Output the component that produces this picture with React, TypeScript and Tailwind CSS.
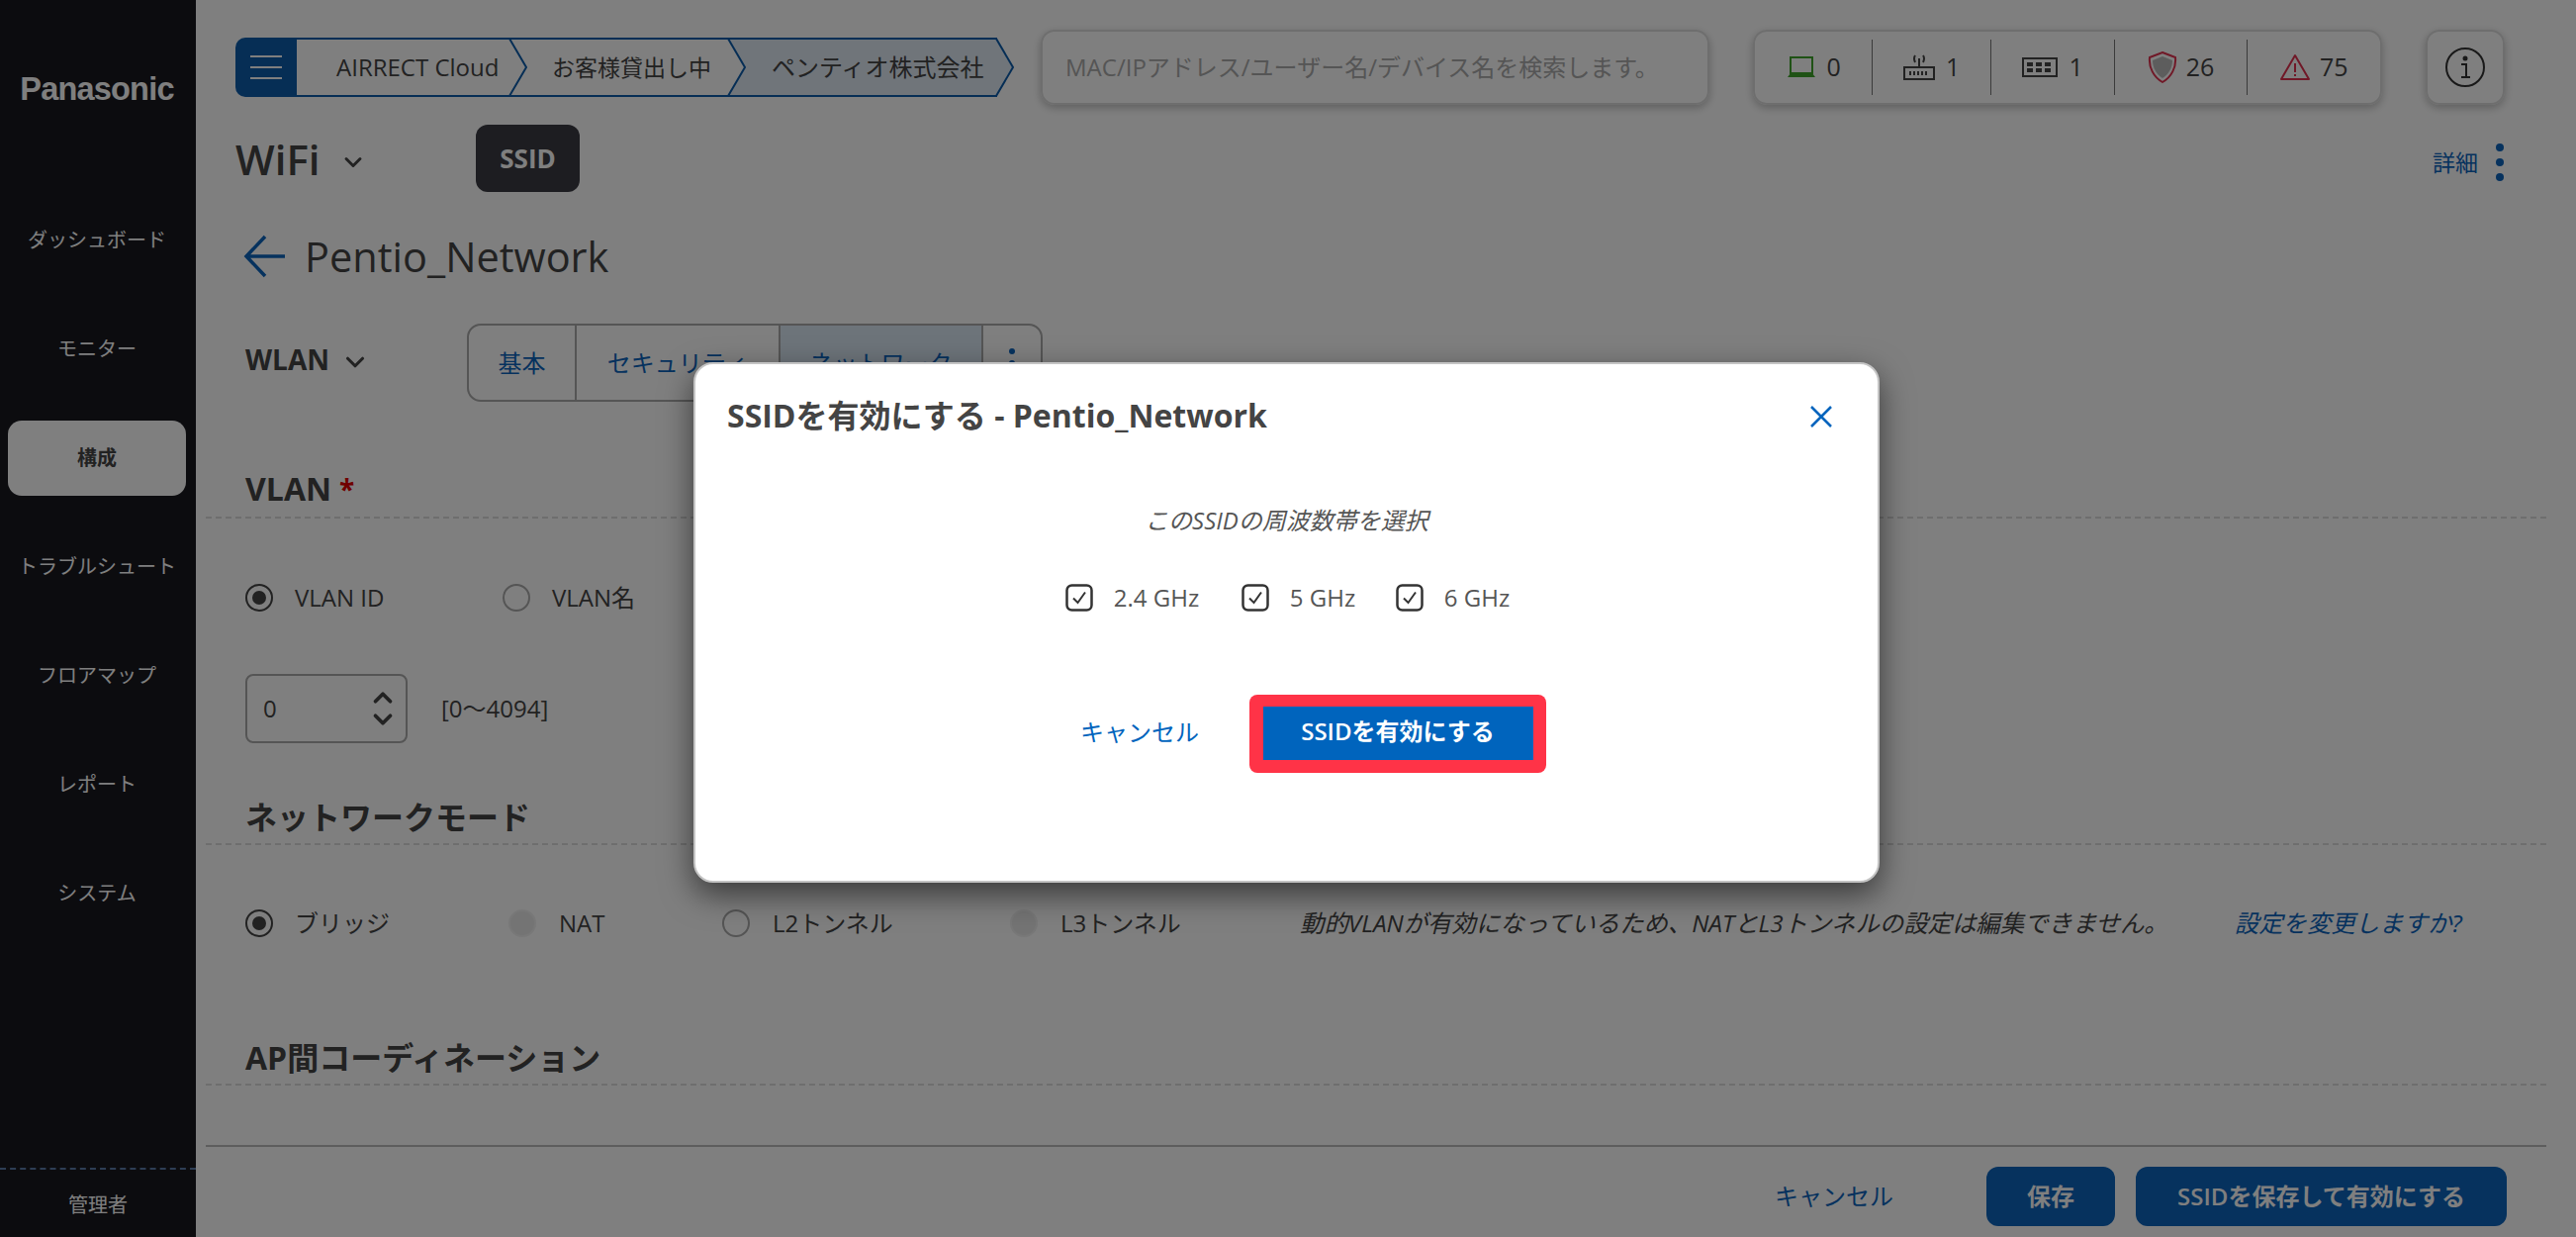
import React from "react";
import { ChevronDown, ChevronUp } from "lucide-react";

const font = { fontFamily: '"Open Sans","Noto Sans CJK JP",sans-serif' };

function Crumb({ label, w, last, text }: { label: string; w: string; last?: boolean; text: string }) {
  return (
    <div className={`relative flex h-full items-center border-y-[2px] border-[#0d5cab] ${w} ${last ? "bg-[#e0eaf5]" : "bg-white"}`}>
      <span className={`relative z-[2] w-full text-[#444] whitespace-nowrap ${text}`}>{label}</span>
      <svg className="absolute right-[-18px] top-[-2px] z-[1]" width="20" height="60" viewBox="0 0 20 60">
        <path d="M1 1 L18 30 L1 59" fill={last ? "#e0eaf5" : "#ffffff"} stroke="#0d5cab" strokeWidth="2" />
      </svg>
    </div>
  );
}

function Sep() {
  return <span className="h-[56px] w-[1px] bg-[#777]" />;
}

function Radio({ checked, disabled }: { checked?: boolean; disabled?: boolean }) {
  return (
    <span
      className={`flex h-[28px] w-[28px] shrink-0 items-center justify-center rounded-full border-[2px] ${
        disabled ? "border-[#f0f0f0] bg-[#e8e8e8]" : checked ? "border-[#444]" : "border-[#aaa]"
      }`}
    >
      {checked && <span className="h-[14px] w-[14px] rounded-full bg-[#444]" />}
    </span>
  );
}

function Section({ children, h, pb, required }: { children: React.ReactNode; h: string; pb: string; required?: boolean }) {
  return (
    <div className={`flex items-end border-b-[2px] border-dashed border-[#ddd] pl-[40px] ${h} ${pb}`}>
      <span className="text-[32px] font-bold leading-[40px] text-[#444]">{children}</span>
      {required && <span className="ml-[8px] text-[28px] font-bold leading-[40px] text-[#e00000]">*</span>}
    </div>
  );
}

function Check({ label, w }: { label: string; w: string }) {
  return (
    <div className={`flex items-center ${w}`}>
      <svg width="28" height="28" viewBox="0 0 28 28" fill="none">
        <rect x="1.5" y="1.5" width="25" height="25" rx="5" stroke="#333" strokeWidth="2.5" />
        <path d="M8 14.5 L12.5 19 L20 8.5" stroke="#333" strokeWidth="2" />
      </svg>
      <span className="ml-[21px] text-[24px] text-[#555] whitespace-nowrap">{label}</span>
    </div>
  );
}

export default function App() {
  const nav = ["ダッシュボード", "モニター", "構成", "トラブルシュート", "フロアマップ", "レポート", "システム"];
  return (
    <div style={font} className="relative flex h-[1250px] w-[2604px] overflow-hidden bg-white">
      <aside className="flex w-[198px] shrink-0 flex-col bg-[#18181f] text-white">
        <div className="flex h-[125px] items-start justify-center pr-[2px] pt-[65px]">
          <span style={{ fontFamily: '"Liberation Sans",sans-serif' }} className="text-[32.5px] font-bold leading-[50px] tracking-[-0.8px] text-white">
            Panasonic
          </span>
        </div>
        <nav className="flex flex-1 flex-col gap-[34px] pl-[8px] pr-[10px] pt-[80px]">
          {nav.map((n, i) => (
            <div
              key={n}
              className={`flex h-[76px] items-center justify-center whitespace-nowrap rounded-[14px] text-[20px] ${
                i === 2 ? "bg-white font-semibold text-[#444]" : ""
              }`}
            >
              {n}
            </div>
          ))}
        </nav>
        <div className="flex h-[70px] items-center justify-center border-t-[2px] border-dashed border-[#5c7ca8] pt-[4px] text-[20px]">管理者</div>
      </aside>

      <main className="flex min-w-0 flex-1 flex-col pl-[10px] pr-[30px]">
        <div className="mt-[30px] flex h-[76px] items-center pl-[30px]">
          <div className="flex h-[60px] w-[788px] shrink-0 items-center">
            <div className="flex h-full w-[62px] shrink-0 flex-col items-center justify-center gap-[9px] rounded-l-[10px] bg-[#0d5cab]">
              <span className="h-[2px] w-[32px] bg-white" />
              <span className="h-[2px] w-[32px] bg-white" />
              <span className="h-[2px] w-[32px] bg-white" />
            </div>
            <Crumb label="AIRRECT Cloud" w="w-[216px]" text="pl-[40px] text-[24px]" />
            <Crumb label="お客様貸出し中" w="w-[221px]" text="pl-[42px] text-[23px]" />
            <Crumb label="ペンティオ株式会社" w="w-[271px]" text="pl-[43px] text-[24px]" last />
          </div>
          <div className="ml-[26px] flex h-[76px] w-[676px] shrink-0 items-center rounded-[14px] border-[2px] border-[#ddd] pl-[23px] text-[24px] text-[#aaa] shadow-[0_3px_8px_rgba(0,0,0,0.25)] whitespace-nowrap">
            MAC/IPアドレス/ユーザー名/デバイス名を検索します。
          </div>
          <div className="ml-[44px] flex h-[76px] w-[636px] shrink-0 items-center rounded-[14px] border-[2px] border-[#ddd] text-[25px] text-[#444] shadow-[0_3px_8px_rgba(0,0,0,0.25)]">
            <div className="flex w-[119px] items-center justify-center gap-[11px]">
              <svg width="30" height="22" viewBox="0 0 30 22" fill="none">
                <rect x="4" y="1" width="22" height="16" stroke="#3fa52a" strokeWidth="2" />
                <path d="M1 21 L4 17 H26 L29 21 Z" fill="#3fa52a" />
              </svg>
              <span>0</span>
            </div>
            <Sep />
            <div className="flex w-[119px] items-center justify-center gap-[11px]">
              <svg width="32" height="26" viewBox="0 0 32 26" fill="none" stroke="#444" strokeWidth="2">
                <rect x="1" y="13" width="30" height="12" />
                <path d="M6 19 H26" strokeDasharray="2 2" strokeWidth="4" />
                <path d="M16 13 V4 M12 8 Q10 4 12 1 M20 8 Q22 4 20 1" />
              </svg>
              <span>1</span>
            </div>
            <Sep />
            <div className="flex w-[125px] items-center justify-center gap-[11px]">
              <svg width="36" height="20" viewBox="0 0 36 20" fill="none" stroke="#444" strokeWidth="2">
                <rect x="1" y="1" width="34" height="18" />
                <path d="M5 7 H31 M5 13 H31" strokeDasharray="6 3" strokeWidth="4" />
              </svg>
              <span>1</span>
            </div>
            <Sep />
            <div className="flex w-[133px] items-center justify-center gap-[9px]">
              <svg width="30" height="32" viewBox="0 0 30 32" fill="none">
                <path d="M15 1 L28 6 C29 16 24 26 15 31 C6 26 1 16 2 6 Z" stroke="#e0314f" strokeWidth="2" />
                <path d="M15 5 L25 9 C25 17 21 23 15 27 C9 23 5 17 5 9 Z" fill="#bbb" />
              </svg>
              <span>26</span>
            </div>
            <Sep />
            <div className="flex w-[135px] items-center justify-center gap-[9px]">
              <svg width="32" height="28" viewBox="0 0 32 28" fill="none">
                <path d="M16 2 L30 26 H2 Z" stroke="#e0314f" strokeWidth="2" strokeLinejoin="round" />
                <path d="M16 10 V19 M16 21 V23" stroke="#e0314f" strokeWidth="2" />
              </svg>
              <span>75</span>
            </div>
          </div>
          <div className="ml-[44px] flex h-[76px] w-[80px] shrink-0 items-center justify-center rounded-[14px] border-[2px] border-[#ddd] shadow-[0_3px_8px_rgba(0,0,0,0.25)]">
            <svg width="42" height="42" viewBox="0 0 42 42" fill="none" stroke="#333" strokeWidth="2">
              <circle cx="21" cy="21" r="19" />
              <path d="M17 18 H22 V31 M17 31 H26" />
              <circle cx="21" cy="12" r="1.5" fill="#333" />
            </svg>
          </div>
        </div>

        <div className="mt-[20px] flex h-[68px] items-center pl-[30px]">
          <span className="w-[105px] text-[42px] font-semibold text-[#444]">WiFi</span>
          <ChevronDown className="mt-[8px]" size={28} strokeWidth={2.5} color="#444" />
          <div className="ml-[110px] flex h-[68px] w-[105px] items-center justify-center rounded-[12px] bg-[#3a3a42] text-[26px] font-bold text-white">SSID</div>
          <div className="ml-auto mt-[8px] flex items-center gap-[18px] pr-[43px]">
            <span className="text-[23px] text-[#0d64bd]">詳細</span>
            <div className="flex flex-col gap-[7px]">
              <span className="h-[8px] w-[8px] rounded-full bg-[#0d64bd]" />
              <span className="h-[8px] w-[8px] rounded-full bg-[#0d64bd]" />
              <span className="h-[8px] w-[8px] rounded-full bg-[#0d64bd]" />
            </div>
          </div>
        </div>

        <div className="mt-[35px] flex h-[60px] items-center pl-[38px]">
          <svg width="46" height="44" viewBox="0 0 46 44" fill="none" stroke="#0d64bd" strokeWidth="3.5">
            <path d="M22 2 L3 22 L22 42 M3 22 H42" />
          </svg>
          <span className="ml-[16px] text-[41.5px] font-medium leading-[60px] text-[#444]">Pentio_Network</span>
        </div>

        <div className="mt-[38px] flex h-[79px] items-center pl-[40px]">
          <span className="-mt-[8px] w-[88px] text-[28px] font-bold text-[#444]">WLAN</span>
          <ChevronDown className="-mt-[2px] ml-[8px]" size={30} strokeWidth={2.5} color="#444" />
          <div className="ml-[98px] flex h-[79px] w-[582px] rounded-[14px] border-[2px] border-[#aaa] text-[24px] text-[#0d64bd]">
            <div className="flex w-[109px] items-center justify-center border-r-[2px] border-[#aaa]">基本</div>
            <div className="flex w-[206px] items-center justify-center border-r-[2px] border-[#aaa]">セキュリティ</div>
            <div className="flex w-[205px] items-center justify-center border-r-[2px] border-[#aaa] bg-[#dbe8f5]">ネットワーク</div>
            <div className="flex flex-1 flex-col items-center justify-center gap-[6px]">
              <span className="h-[6px] w-[6px] rounded-full bg-[#0d64bd]" />
              <span className="h-[6px] w-[6px] rounded-full bg-[#0d64bd]" />
              <span className="h-[6px] w-[6px] rounded-full bg-[#0d64bd]" />
            </div>
          </div>
        </div>

        <Section h="h-[118px]" pb="pb-[8px]" required>VLAN</Section>

        <div className="mt-[60px] flex h-[40px] items-center pl-[40px] text-[24px] text-[#444]">
          <Radio checked />
          <span className="ml-[22px] w-[210px]">VLAN ID</span>
          <Radio />
          <span className="ml-[22px]">VLAN名</span>
        </div>

        <div className="mt-[57px] flex h-[70px] items-center pl-[40px]">
          <div className="flex h-[70px] w-[164px] items-center justify-between rounded-[8px] border-[2px] border-[#aaa] pl-[16px] pr-[8px] text-[24px] text-[#444]">
            <span>0</span>
            <div className="flex flex-col items-center">
              <ChevronUp size={30} strokeWidth={3} className="-mb-[4px]" />
              <ChevronDown size={30} strokeWidth={3} className="-mt-[4px]" />
            </div>
          </div>
          <span className="ml-[34px] text-[24px] text-[#444]">[0〜4094]</span>
        </div>

        <Section h="h-[103px]" pb="pb-[6px]">ネットワークモード</Section>

        <div className="mt-[59px] flex h-[40px] items-center pl-[40px] text-[24px] text-[#444]">
          <Radio checked />
          <span className="ml-[22px] w-[216px]">ブリッジ</span>
          <Radio disabled />
          <span className="ml-[23px] w-[165px]">NAT</span>
          <Radio />
          <span className="ml-[23px] w-[240px]">L2トンネル</span>
          <Radio disabled />
          <span className="ml-[23px] w-[242px]">L3トンネル</span>
          <span className="text-[24.4px] italic whitespace-nowrap">動的VLANが有効になっているため、NATとL3トンネルの設定は編集できません。</span>
          <span className="ml-[67px] text-[24.4px] italic text-[#0d64bd] whitespace-nowrap">設定を変更しますか?</span>
        </div>

        <Section h="h-[144px]" pb="pb-[6px]">AP間コーディネーション</Section>

        <div className="mt-[60px] flex flex-1 items-center border-t-[2px] border-[#bbb] pr-[40px] pt-[8px]">
          <span className="ml-auto text-[24px] text-[#0d64bd]">キャンセル</span>
          <div className="ml-[94px] flex h-[60px] w-[130px] items-center justify-center rounded-[12px] bg-[#0d64bd] text-[24px] font-semibold text-white">保存</div>
          <div className="ml-[21px] flex h-[60px] w-[375px] items-center justify-center rounded-[12px] bg-[#0d64bd] text-[24px] font-semibold text-white">SSIDを保存して有効にする</div>
        </div>
      </main>

      <div className="absolute inset-0 z-20 bg-black/50" />

      <div className="absolute left-[701px] top-[366px] z-30 flex h-[526px] w-[1199px] flex-col rounded-[20px] border-[2px] border-[#c4c4c4] bg-white shadow-[0_12px_32px_rgba(0,0,0,0.55)]">
        <div className="flex h-[106px] items-center pl-[32px] pr-[45px]">
          <span className="-mt-[2px] text-[32px] font-bold text-[#444]">SSIDを有効にする - Pentio_Network</span>
          <svg className="ml-auto" width="24" height="24" viewBox="0 0 24 24" fill="none" stroke="#0064bd" strokeWidth="2.5">
            <path d="M2 2 L22 22 M22 2 L2 22" />
          </svg>
        </div>
        <div className="mt-[32px] text-center text-[24px] italic leading-[40px] text-[#555]">このSSIDの周波数帯を選択</div>
        <div className="mt-[38px] flex h-[40px] items-center justify-center pl-[2px]">
          <Check label="2.4 GHz" w="w-[178px]" />
          <Check label="5 GHz" w="w-[156px]" />
          <Check label="6 GHz" w="" />
        </div>
        <div className="mt-[78px] flex items-center pl-[389px]">
          <span className="-mt-[4px] text-[24px] text-[#0064bd]">キャンセル</span>
          <div className="ml-[51px] flex h-[79px] w-[300px] items-center justify-center rounded-[8px] bg-[#ff3347] pb-[2px]">
            <div className="flex h-[54px] w-[273px] items-center justify-center bg-[#0064bd] pb-[4px] text-[24px] font-semibold text-white">SSIDを有効にする</div>
          </div>
        </div>
      </div>
    </div>
  );
}
